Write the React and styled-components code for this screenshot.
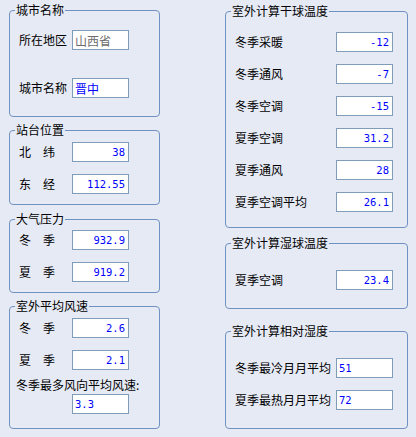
import React from 'react';
import styled, { createGlobalStyle } from 'styled-components';

const GlobalStyle = createGlobalStyle`
  html, body {
    margin: 0;
    padding: 0;
    background: #e6eaf5;
  }
  body {
    font-family: "Noto Sans CJK SC", "Liberation Sans", sans-serif;
    font-size: 12px;
    color: #000;
  }
`;

const Page = styled.div`
  display: flex;
  gap: 65px;
  width: 416px;
  height: 437px;
  padding-left: 9px;
  box-sizing: border-box;
  overflow: hidden;
`;

const Column = styled.div`
  display: flex;
  flex-direction: column;
  width: ${p => p.$width}px;
  padding-top: ${p => p.$top}px;
`;

const Group = styled.fieldset`
  margin: ${p => p.$gap || 0}px 0 0 0;
  padding: 0;
  min-width: 0;
  box-sizing: border-box;
  border: 1px solid #7092c2;
  border-radius: 4px;
`;

const Title = styled.legend`
  margin-left: 5px;
  padding: 0 1px;
  line-height: 14px;
  height: 14px;
  font-size: 12px;
`;

const Body = styled.div`
  display: flex;
  flex-direction: column;
  gap: ${p => p.$gap}px;
  padding: ${p => p.$pt}px 0 ${p => p.$pb}px 9px;
`;

const Row = styled.div`
  display: flex;
  align-items: center;
  height: 20px;
`;

const Label = styled.span`
  width: ${p => p.$width}px;
  flex: none;
  white-space: nowrap;
  line-height: 14px;
  letter-spacing: ${p => (p.$spaced ? '12px' : '0')};
`;

const Note = styled.div`
  display: flex;
  flex-direction: column;
  margin-top: -4px;
`;

const NoteText = styled.div`
  margin-left: -3px;
  line-height: 14px;
  height: 14px;
  white-space: nowrap;
`;

const Field = styled.div`
  width: 57px;
  height: 20px;
  box-sizing: border-box;
  flex: none;
  background: #fff;
  border: 1px solid #7f9db9;
  display: flex;
  align-items: center;
  justify-content: ${p => (p.$left ? 'flex-start' : 'flex-end')};
  padding: 0 3px 0 2px;
  color: ${p => (p.$muted ? '#6d6d6d' : '#0000ff')};
  font-family: ${p => (p.$cjk ? '"Noto Sans CJK SC", sans-serif' : '"DejaVu Sans Mono", "Liberation Mono", monospace')};
  font-size: ${p => (p.$cjk ? '12px' : '10.5px')};
  white-space: nowrap;
`;

const NoteField = styled(Field)`
  margin: 2px 0 0 53px;
`;

const Item = ({ label, value, width = 53, spaced, left, muted, cjk }) => (
  <Row>
    <Label $width={width} $spaced={spaced}>{label}</Label>
    <Field $left={left} $muted={muted} $cjk={cjk}>{value}</Field>
  </Row>
);

const dryBulb = [
  ['冬季采暖', '-12'],
  ['冬季通风', '-7'],
  ['冬季空调', '-15'],
  ['夏季空调', '31.2'],
  ['夏季通风', '28'],
  ['夏季空调平均', '26.1'],
];

const App = () => (
  <>
    <GlobalStyle />
    <Page>
      <Column $width={151} $top={3}>
        <Group>
          <Title>城市名称</Title>
          <Body $pt={13} $gap={28} $pb={18}>
            <Item label='所在地区' value='山西省' left muted cjk />
            <Item label='城市名称' value='晋中' left cjk />
          </Body>
        </Group>

        <Group $gap={6}>
          <Title>站台位置</Title>
          <Body $pt={5} $gap={12} $pb={10}>
            <Item label='北纬' value='38' spaced />
            <Item label='东经' value='112.55' spaced />
          </Body>
        </Group>

        <Group $gap={7}>
          <Title>大气压力</Title>
          <Body $pt={4} $gap={12} $pb={10}>
            <Item label='冬季' value='932.9' spaced />
            <Item label='夏季' value='919.2' spaced />
          </Body>
        </Group>

        <Group $gap={6}>
          <Title>室外平均风速</Title>
          <Body $pt={5} $gap={12} $pb={14}>
            <Item label='冬季' value='2.6' spaced />
            <Item label='夏季' value='2.1' spaced />
            <Note>
              <NoteText>冬季最多风向平均风速:</NoteText>
              <NoteField $left>3.3</NoteField>
            </Note>
          </Body>
        </Group>
      </Column>

      <Column $width={183} $top={4}>
        <Group>
          <Title>室外计算干球温度</Title>
          <Body $pt={14} $gap={12} $pb={15}>
            {dryBulb.map(([label, value]) => (
              <Item key={label} label={label} value={value} width={101} />
            ))}
          </Body>
        </Group>

        <Group $gap={8}>
          <Title>室外计算湿球温度</Title>
          <Body $pt={20} $gap={12} $pb={18}>
            <Item label='夏季空调' value='23.4' width={101} />
          </Body>
        </Group>

        <Group $gap={15}>
          <Title>室外计算相对湿度</Title>
          <Body $pt={20} $gap={12} $pb={18}>
            <Item label='冬季最冷月月平均' value='51' width={101} left />
            <Item label='夏季最热月月平均' value='72' width={101} left />
          </Body>
        </Group>
      </Column>
    </Page>
  </>
);

export default App;
